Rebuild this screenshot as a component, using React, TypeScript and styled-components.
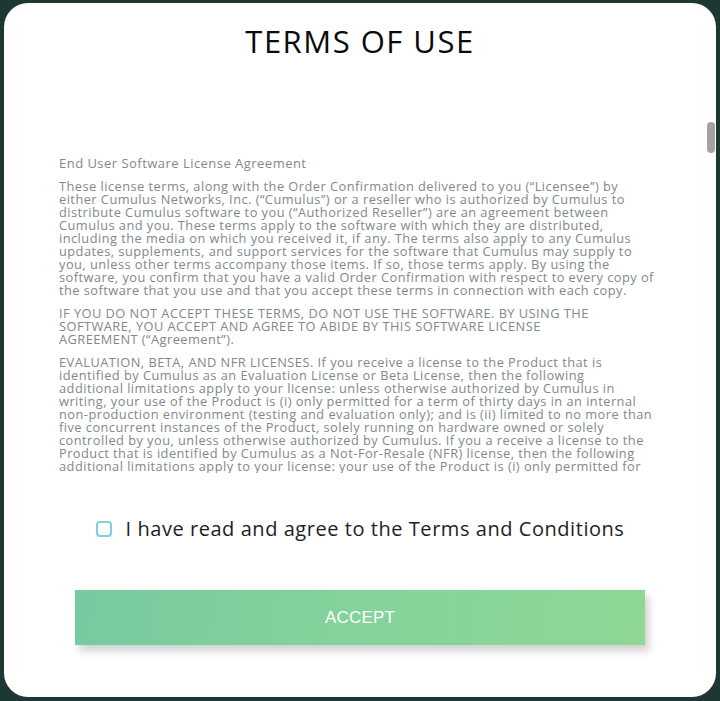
import React from "react";
import styled, { createGlobalStyle } from "styled-components";

const Global = createGlobalStyle`
  html, body { margin: 0; padding: 0; background: #1d3734; }
  body { font-family: "Open Sans", "Noto Sans", sans-serif; }
  * { box-sizing: border-box; }
`;

const Page = styled.div`
  height: 701px;
  padding: 3px 4px 4px 4px;
  display: flex;
`;

const Modal = styled.div`
  position: relative;
  flex: 1;
  background: #ffffff;
  border-radius: 24px;
  display: flex;
  flex-direction: column;
  align-items: center;
  overflow: hidden;
`;

const Title = styled.h1`
  margin: 20px 0 0 0;
  font-family: "Open Sans", sans-serif;
  font-weight: 500;
  font-size: 31px;
  line-height: 36px;
  letter-spacing: 1.5px;
  color: #0a0a0a;
`;

const TermsBox = styled.div`
  margin-top: 97px;
  width: 602px;
  height: 317px;
  overflow: hidden;
  color: #7f888d;
  font-size: 12.8px;
  line-height: 13px;
  letter-spacing: 0.47px;
  white-space: nowrap;
`;

const Heading = styled.p`
  margin: 0 0 10px 0;
  font-size: 13px;
  line-height: 14px;
`;

const Para = styled.p`
  margin: 0 0 10px 0;
`;

const Thumb = styled.div`
  position: absolute;
  right: 1px;
  top: 119px;
  width: 8px;
  height: 31px;
  border-radius: 4px;
  background: #a3a3a3;
`;

const AgreeRow = styled.label`
  margin-top: 44px;
  display: flex;
  align-items: center;
  gap: 14px;
  cursor: pointer;
`;

const Box = styled.span`
  width: 16px;
  height: 16px;
  border: 2px solid #7fd0d8;
  border-radius: 4px;
  display: inline-block;
`;

const AgreeText = styled.span`
  font-size: 20px;
  line-height: 24px;
  color: #1e1e1e;
  letter-spacing: 0.55px;
`;

const AcceptButton = styled.button`
  margin-top: 49px;
  width: 570px;
  height: 55px;
  border: none;
  border-radius: 0;
  background: linear-gradient(100deg, #76ca9f 0%, #84d39b 50%, #90d794 100%);
  box-shadow: 4px 6px 8px rgba(0, 0, 0, 0.18);
  color: #ffffff;
  font-family: "Liberation Sans", Arial, sans-serif;
  font-size: 17px;
  letter-spacing: 0.2px;
  cursor: pointer;
`;

const p1 = [
  "These license terms, along with the Order Confirmation delivered to you (“Licensee”) by",
  "either Cumulus Networks, Inc. (“Cumulus”) or a reseller who is authorized by Cumulus to",
  "distribute Cumulus software to you (“Authorized Reseller”) are an agreement between",
  "Cumulus and you. These terms apply to the software with which they are distributed,",
  "including the media on which you received it, if any. The terms also apply to any Cumulus",
  "updates, supplements, and support services for the software that Cumulus may supply to",
  "you, unless other terms accompany those items. If so, those terms apply. By using the",
  "software, you confirm that you have a valid Order Confirmation with respect to every copy of",
  "the software that you use and that you accept these terms in connection with each copy.",
];

const p2 = [
  "IF YOU DO NOT ACCEPT THESE TERMS, DO NOT USE THE SOFTWARE. BY USING THE",
  "SOFTWARE, YOU ACCEPT AND AGREE TO ABIDE BY THIS SOFTWARE LICENSE",
  "AGREEMENT (“Agreement”).",
];

const p3 = [
  "EVALUATION, BETA, AND NFR LICENSES. If you receive a license to the Product that is",
  "identified by Cumulus as an Evaluation License or Beta License, then the following",
  "additional limitations apply to your license: unless otherwise authorized by Cumulus in",
  "writing, your use of the Product is (i) only permitted for a term of thirty days in an internal",
  "non-production environment (testing and evaluation only); and is (ii) limited to no more than",
  "five concurrent instances of the Product, solely running on hardware owned or solely",
  "controlled by you, unless otherwise authorized by Cumulus. If you a receive a license to the",
  "Product that is identified by Cumulus as a Not-For-Resale (NFR) license, then the following",
  "additional limitations apply to your license: your use of the Product is (i) only permitted for",
  "demonstration, testing, or evaluation purposes; and is (ii) not for production use.",
];

const Lines: React.FC<{ lines: string[] }> = ({ lines }) => (
  <Para>
    {lines.map((l, i) => (
      <React.Fragment key={i}>
        {l}
        {i < lines.length - 1 && <br />}
      </React.Fragment>
    ))}
  </Para>
);

export default function App() {
  return (
    <>
      <Global />
      <Page>
        <Modal>
          <Title>TERMS OF USE</Title>
          <TermsBox>
            <Heading>End User Software License Agreement</Heading>
            <Lines lines={p1} />
            <Lines lines={p2} />
            <Lines lines={p3} />
          </TermsBox>
          <Thumb />
          <AgreeRow>
            <Box />
            <AgreeText>I have read and agree to the Terms and Conditions</AgreeText>
          </AgreeRow>
          <AcceptButton>ACCEPT</AcceptButton>
        </Modal>
      </Page>
    </>
  );
}
